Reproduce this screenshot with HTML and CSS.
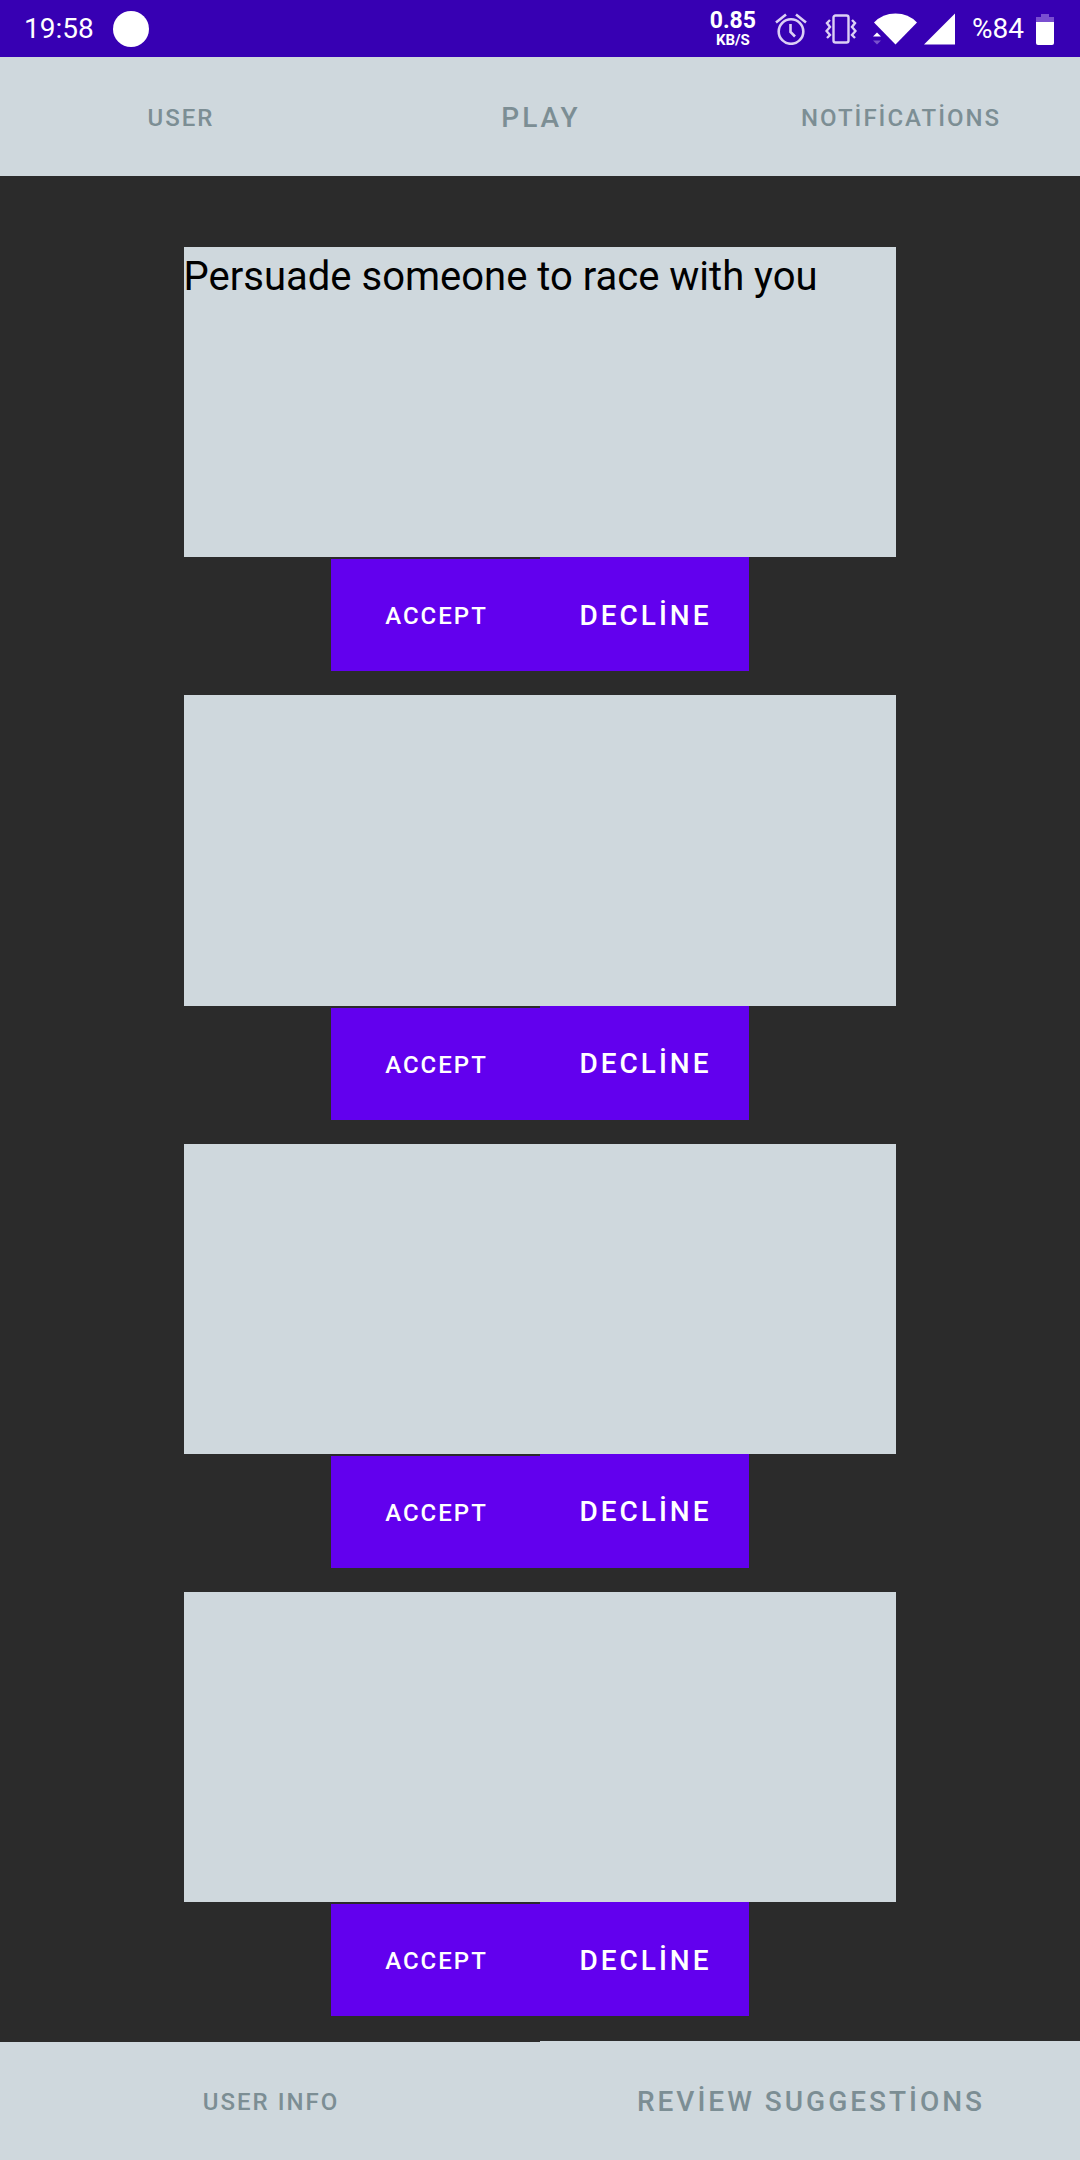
FILE: index.html
```html
<!DOCTYPE html>
<html lang="en">
<head>
<meta charset="utf-8">
<meta name="viewport" content="width=device-width, initial-scale=1">
<title>Suggestions</title>
<link rel="stylesheet" href="styles.css">
</head>
<body>
<div class="status">
  <div class="status-left">
    <span class="status-text">19:58</span>
    <span class="dot"></span>
  </div>
  <div class="status-right">
    <div class="speed"><span class="speed-value">0.85</span><span class="speed-unit">KB/S</span></div>
    <svg class="alarm" width="32" height="32" viewBox="0 0 32 32" fill="none" stroke="#dccff5" stroke-width="2.600">
      <circle cx="16" cy="18.500" r="12.300"/><path d="M15.500 11v8l4.500 4.500"/><path d="M1 9.500 11 1.500M21 1.500l10 8"/>
    </svg>
    <svg class="vibrate" width="32" height="32" viewBox="0 0 32 32" fill="none" stroke="#dccff5" stroke-width="2.400">
      <rect x="8.500" y="2.500" width="15" height="27" rx="2"/><path d="M5 7 2 10l3 4-3.500 4L5 22l-3 3M27 7l3 3-3 4 3.500 4-3.500 4 3 3"/>
    </svg>
    <svg class="wifi" width="44" height="32" viewBox="0 0 44 32">
      <path fill="#fff" d="M1 9.500Q9.500 .500 22.500 .500T44 9.500L22.500 31.500z"/>
      <path fill="#fff" d="M0 23.500l4-4 4 4z"/><path fill="#7a52cd" d="M0 27.500h8l-4 4z"/>
    </svg>
    <svg class="signal" width="31" height="32" viewBox="0 0 31 32"><path fill="#fff" d="M31 .500V31.500H0z"/></svg>
    <span class="status-text percent">%84</span>
    <svg class="battery" width="18" height="32" viewBox="0 0 18 32">
      <path fill="#7a4fd0" d="M5 1h8v3h5v6H0V4h5z"/><path fill="#fff" d="M0 9h18v21a2 2 0 0 1-2 2H2a2 2 0 0 1-2-2z"/>
    </svg>
  </div>
</div>

<nav class="bar tabs">
  <button class="tab">USER</button>
  <button class="tab large">PLAY</button>
  <button class="tab">NOTİFİCATİONS</button>
</nav>

<main class="list">
  <section class="item">
    <p class="card">Persuade someone to race with you</p>
    <div class="actions"><button class="action accept">ACCEPT</button><button class="action large">DECLİNE</button></div>
  </section>
  <section class="item">
    <p class="card"></p>
    <div class="actions"><button class="action accept">ACCEPT</button><button class="action large">DECLİNE</button></div>
  </section>
  <section class="item">
    <p class="card"></p>
    <div class="actions"><button class="action accept">ACCEPT</button><button class="action large">DECLİNE</button></div>
  </section>
  <section class="item">
    <p class="card"></p>
    <div class="actions"><button class="action accept">ACCEPT</button><button class="action large">DECLİNE</button></div>
  </section>
</main>

<footer class="bar footer">
  <button class="tab info">USER INFO</button>
  <button class="tab large">REVİEW SUGGESTİONS</button>
</footer>
</body>
</html>
```
FILE: styles.css
```css
* { box-sizing: border-box; }

body {
  margin: 0;
  min-height: 100vh;
  display: flex;
  flex-direction: column;
  background: #2b2b2b;
  font-family: Roboto, "Noto Sans", sans-serif;
}

button {
  border: 0;
  padding: 2px 0 0 2px;
  font: inherit;
  cursor: pointer;
}

/* Status bar */
.status {
  height: 57px;
  padding: 0 26px 0 24px;
  display: flex;
  align-items: center;
  justify-content: space-between;
  background: #3700b3;
  color: #fff;
}

.status-left,
.status-right {
  display: flex;
  align-items: center;
}

.status-left { gap: 19px; }

.status-text {
  font-size: 28px;
  line-height: 32px;
}

.dot {
  width: 36px;
  height: 36px;
  border-radius: 50%;
  background: #fff;
}

.speed {
  display: flex;
  flex-direction: column;
  align-items: center;
  font-weight: 700;
}

.speed-value {
  font-size: 23px;
  line-height: 22px;
}

.speed-unit {
  font-size: 15px;
  line-height: 16px;
}

.alarm { margin-left: 19px; }
.vibrate { margin-left: 18px; }
.wifi { margin-left: 16px; }
.signal { margin-left: 7px; }
.percent { margin-left: 17px; }
.battery { margin-left: 12px; }

/* Top and bottom bars */
.bar {
  display: grid;
  grid-auto-flow: column;
  grid-auto-columns: 1fr;
}

.tabs { height: 119px; }
.footer { height: 119px; }

.tab {
  background: #cfd8dd;
  color: #7c8e94;
  font-size: 24px;
  font-weight: 500;
  letter-spacing: 2px;
}

.info { margin-top: 1px; }

/* Suggestions */
.list {
  flex: 1;
  padding: 71px 0 25px;
  display: grid;
  grid-auto-rows: 1fr;
  gap: 24px;
}

.item {
  display: flex;
  flex-direction: column;
  align-items: center;
}

.card {
  flex: 1;
  width: 66%;
  min-height: 240px;
  margin: 0;
  padding-top: 6px;
  background: #cfd8dd;
  color: #000;
  font-size: 40px;
  line-height: 48px;
}

.actions {
  width: 418px;
  height: 114px;
  display: grid;
  grid-template-columns: 1fr 1fr;
}

.action {
  background: #6200ee;
  color: #fff;
  font-size: 24px;
  font-weight: 500;
  letter-spacing: 2px;
}

.accept { margin-top: 2px; }

.large {
  font-size: 28px;
  letter-spacing: 3px;
}
```
